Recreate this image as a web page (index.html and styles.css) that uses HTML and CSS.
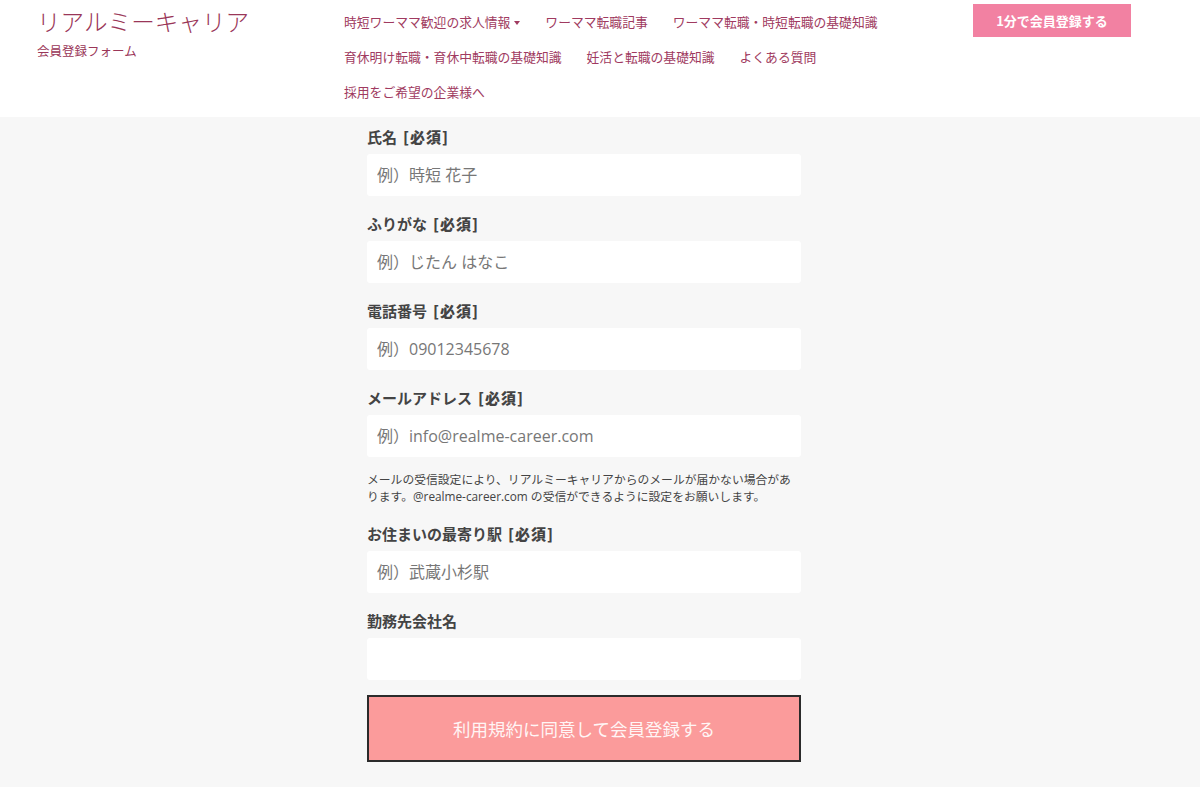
FILE: index.html
```html
<!DOCTYPE html>
<html lang="ja">
  <head>
    <meta charset="utf-8">
    <title>会員登録フォーム | リアルミーキャリア</title>
    <link rel="stylesheet" href="styles.css">
  </head>
<body>

<header class="site-header">
  <div class="brand">
    <a class="brand-name" href="#">リアルミーキャリア</a>
    <p class="brand-sub">会員登録フォーム</p>
  </div>

  <nav class="global-nav">
    <a href="#" class="has-sub">時短ワーママ歓迎の求人情報</a>
    <a href="#">ワーママ転職記事</a>
    <a href="#">ワーママ転職・時短転職の基礎知識</a>
    <a href="#">育休明け転職・育休中転職の基礎知識</a>
    <a href="#">妊活と転職の基礎知識</a>
    <a href="#">よくある質問</a>
    <a href="#">採用をご希望の企業様へ</a>
  </nav>

  <a class="header-cta" href="#">1分で会員登録する</a>
</header>

<main class="page">
  <form class="signup">
    <div class="field">
      <label for="name">氏名<b>[必須]</b></label>
      <input type="text" id="name" placeholder="例）時短 花子">
    </div>

    <div class="field">
      <label for="kana">ふりがな<b>[必須]</b></label>
      <input type="text" id="kana" placeholder="例）じたん はなこ">
    </div>

    <div class="field">
      <label for="tel">電話番号<b>[必須]</b></label>
      <input type="tel" id="tel" placeholder="例）09012345678">
    </div>

    <div class="field field-mail">
      <label for="mail">メールアドレス<b>[必須]</b></label>
      <input type="email" id="mail" placeholder="例）info@realme-career.com">
      <p class="note">メールの受信設定により、リアルミーキャリアからのメールが届かない場合があります。@realme-career.com の受信ができるように設定をお願いします。</p>
    </div>

    <div class="field">
      <label for="station">お住まいの最寄り駅<b>[必須]</b></label>
      <input type="text" id="station" placeholder="例）武蔵小杉駅">
    </div>

    <div class="field">
      <label for="company">勤務先会社名</label>
      <input type="text" id="company">
    </div>

    <button type="submit" class="submit">利用規約に同意して会員登録する</button>
  </form>
</main>

</body>
</html>
```

FILE: styles.css
```css
body {
  margin: 0;
  background: #f7f7f7;
  font-family: "Noto Sans CJK JP", "Noto Sans", sans-serif;
  color: #444;
}

a {
  text-decoration: none;
}

/* header */
.site-header {
  display: flex;
  align-items: flex-start;
  height: 117px;
  box-sizing: border-box;
  padding: 4px 0 0 37px;
  background: #fff;
}

.brand {
  width: 307px;
  flex-shrink: 0;
}

.brand-name {
  display: block;
  font-size: 23.6px;
  line-height: 34px;
  font-weight: 300;
  color: #9a3658;
}

.brand-sub {
  margin: 4px 0 0;
  font-size: 12.5px;
  line-height: 18px;
  color: #9a3658;
}

.global-nav {
  display: flex;
  flex-wrap: wrap;
  width: 580px;
  column-gap: 25px;
}

.global-nav a {
  font-size: 12.8px;
  line-height: 35px;
  color: #a03a60;
}

.global-nav .has-sub::after {
  content: "";
  display: inline-block;
  margin-left: 4px;
  vertical-align: 2px;
  border-left: 3px solid transparent;
  border-right: 3px solid transparent;
  border-top: 4px solid #a03a60;
}

.header-cta {
  margin: 0 69px 0 auto;
  width: 158px;
  height: 33px;
  line-height: 33px;
  text-align: center;
  background: #f281a2;
  color: #fff;
  font-size: 13px;
  font-weight: bold;
}

/* form */
.page {
  padding-top: 9px;
}

.signup {
  width: 434px;
  margin: 0 0 0 367px;
}

.field {
  margin-bottom: 17px;
}

.field label {
  display: block;
  font-size: 15px;
  line-height: 22px;
  font-weight: bold;
  color: #444;
  margin-bottom: 6px;
}

.field label b {
  margin-left: 6px;
  letter-spacing: 1px;
}

.field input {
  display: block;
  width: 100%;
  height: 42px;
  box-sizing: border-box;
  padding: 0 10px;
  border: none;
  border-radius: 3px;
  background: #fff;
  font-family: "Open Sans", "Noto Sans CJK JP", sans-serif;
  font-size: 16px;
  color: #444;
}

.field input::placeholder {
  color: #777;
}

.note {
  margin: 14px 0 0;
  font-family: "Open Sans", "Noto Sans CJK JP", sans-serif;
  font-size: 11.8px;
  line-height: 17px;
  color: #444;
}

.field-mail {
  margin-bottom: 18px;
}

.submit {
  display: block;
  width: 100%;
  height: 67px;
  margin-top: -2px;
  border: 2px solid #2b2b2b;
  background: #fb9b9b;
  color: #fff5f5;
  font-family: inherit;
  font-size: 17.5px;
  cursor: pointer;
}
```
